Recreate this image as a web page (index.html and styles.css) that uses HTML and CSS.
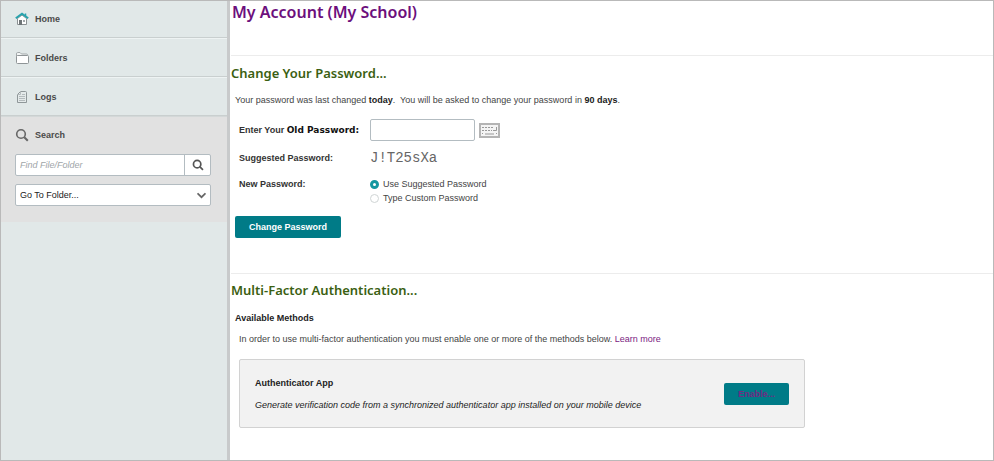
FILE: index.html
```html
<!DOCTYPE html>
<html lang="en">
<head>
    <meta charset="UTF-8">
    <meta name="viewport" content="width=device-width, initial-scale=1.0">
    <title>My Account (My School)</title>
    <link rel="stylesheet" href="styles.css">
</head>
<body>
    <aside class="sidebar">
        <nav>
            <a class="nav-item" href="#">
                <svg class="icon" viewBox="0 0 14 14">
                    <path d="M2.500 6.500V12.500H11.500V6.500L7 3Z" fill="#fff" stroke="#8a9092"/>
                    <rect x="4" y="8" width="3" height="5" fill="#6f7577"/>
                    <rect x="8" y="8" width="2" height="2" fill="#a3a9ab"/>
                    <path d="M10.500 1.500V4" stroke="#27a3ad" stroke-width="1.500"/>
                    <path d="M.8 6.300L7 1.800L13.200 6.300" fill="none" stroke="#27a3ad" stroke-width="2"/>
                </svg>
                Home
            </a>
            <a class="nav-item" href="#">
                <svg class="icon" viewBox="0 0 14 14">
                    <path d="M1.500 11V3Q1.500 1.500 2.500 1.500H5L6.500 3H11.500Q12.500 3 12.500 4" fill="#f2f5f5" stroke="#a3a9ab"/>
                    <rect x="1.500" y="4.500" width="12" height="8" rx="1" fill="#fff" stroke="#8f9597"/>
                </svg>
                Folders
            </a>
            <a class="nav-item" href="#">
                <svg class="icon" viewBox="0 0 14 14">
                    <path d="M5.500 1.500H10.500Q11.500 1.500 11.500 2.500V12.500H2.500V4.500Z" fill="#e4eaea" stroke="#8f9799"/>
                    <path d="M5.500 1.500V4.500H2.500M4 6.500H10M4 8.500H10M4 10.500H10M7 4.500H10" fill="none" stroke="#b4bbbd"/>
                </svg>
                Logs
            </a>
        </nav>
        <form class="search">
            <label class="search-title" for="find">
                <svg class="icon" viewBox="0 0 14 14">
                    <circle cx="6" cy="6" r="4.300" fill="none" stroke="#666" stroke-width="1.600"/>
                    <path d="M9.300 9.300L12.800 12.800" stroke="#666" stroke-width="2"/>
                </svg>
                Search
            </label>
            <div class="search-box">
                <input type="text" id="find" placeholder="Find File/Folder">
                <button type="button" aria-label="Search">
                    <svg class="icon-small" viewBox="0 0 14 14">
                        <circle cx="6" cy="6" r="4.300" fill="none" stroke="#555" stroke-width="2"/>
                        <path d="M9.300 9.300L12.800 12.800" stroke="#555" stroke-width="2"/>
                    </svg>
                </button>
            </div>
            <div class="folder-select">
                <select aria-label="Go To Folder">
                    <option>Go To Folder...</option>
                </select>
                <svg class="chevron" viewBox="0 0 8 6">
                    <path d="M.5 1L4 4.500L7.500 1" fill="none" stroke="#666" stroke-width="1.500"/>
                </svg>
            </div>
        </form>
    </aside>

    <main class="content">
        <h1>My Account (My School)</h1>

        <section class="password-section">
            <h2>Change Your Password...</h2>
            <p class="intro">Your password was last changed <strong>today</strong>.&nbsp; You will be asked to change your password in <strong>90 days</strong>.</p>
            <form>
                <div class="form-grid">
                    <label for="old-password">Enter Your <span class="emphasis">Old Password:</span></label>
                    <div class="old-password">
                        <input type="password" id="old-password">
                        <svg class="keyboard" viewBox="0 0 21 15">
                            <rect x="1" y="1" width="19" height="13" fill="#f4f4f4" stroke="#b4b4b4" stroke-width="2"/>
                            <path d="M3 4.500H15M3 7.500H13" stroke="#999" stroke-dasharray="2 1"/>
                            <path d="M17.500 4V7.500H14M3 10.500H4M6 11H15M17 10.500H18" fill="none" stroke="#999"/>
                        </svg>
                    </div>
                    <span>Suggested Password:</span>
                    <output class="suggested">J!T25sXa</output>
                    <span id="new-password">New Password:</span>
                    <div class="choices" role="radiogroup" aria-labelledby="new-password">
                        <label><input type="radio" name="choice" checked> Use Suggested Password</label>
                        <label><input type="radio" name="choice"> Type Custom Password</label>
                    </div>
                </div>
                <button type="button" class="button">Change Password</button>
            </form>
        </section>

        <section class="mfa-section">
            <h2>Multi-Factor Authentication...</h2>
            <h3 class="methods-title">Available Methods</h3>
            <p class="methods-text">In order to use multi-factor authentication you must enable one or more of the methods below. <a href="#">Learn more</a></p>
            <div class="method">
                <div>
                    <h3>Authenticator App</h3>
                    <p>Generate verification code from a synchronized authenticator app installed on your mobile device</p>
                </div>
                <button type="button" class="button enable">Enable...</button>
            </div>
        </section>
    </main>
</body>
</html>
```

FILE: styles.css
```css
* {
    box-sizing: border-box;
}
body {
    display: flex;
    min-height: 100vh;
    margin: 0;
    border: 1px solid #b9b9b9;
    font-family: "Liberation Sans", Arial, sans-serif;
    font-size: 9px;
    line-height: 14px;
    color: #444;
    background: #fff;
}
h1, h2 {
    margin: 0;
    font-family: "Noto Sans", sans-serif;
    font-weight: 600;
}
h1 {
    padding-left: 1px;
    font-size: 16px;
    line-height: 22px;
    color: #6c0f7c;
}
h2 {
    font-size: 13px;
    line-height: 18px;
    color: #3b5f12;
}
h3 {
    margin: 0;
    font-size: 9px;
    color: #222;
}
p {
    margin: 0;
}
input, select, button {
    font-family: inherit;
    font-size: 9px;
}

/* Sidebar */
.sidebar {
    flex: none;
    width: 229px;
    border-right: 3px solid #c8cacb;
    background: #e1e8e8;
}
.nav-item {
    display: flex;
    align-items: center;
    gap: 6px;
    height: 39px;
    padding: 0 14px;
    border-top: 1px solid #eef3f3;
    border-bottom: 1px solid #c9cfcf;
    font-weight: bold;
    color: #4a4a4a;
    text-decoration: none;
}
.nav-item:first-child {
    height: 37px;
    border-top: none;
}
.icon {
    width: 14px;
    height: 14px;
}
.search {
    padding: 11px 16px 16px 14px;
    border-top: 1px solid #d3d8d8;
    background: #e1e1e1;
}
.search-title {
    display: flex;
    align-items: center;
    gap: 6px;
    margin-bottom: 12px;
    font-weight: bold;
    color: #4a4a4a;
}
.search-box {
    display: flex;
    height: 22px;
    margin-bottom: 8px;
    border: 1px solid #b3bcc1;
    border-radius: 2px;
    background: #fff;
}
.search-box input {
    flex: 1;
    min-width: 0;
    padding: 0 4px;
    border: none;
    background: none;
}
.search-box input::placeholder {
    font-style: italic;
    color: #a0a5a8;
}
.search-box button {
    display: flex;
    align-items: center;
    justify-content: center;
    width: 26px;
    padding: 0;
    border: none;
    border-left: 1px solid #b3bcc1;
    background: none;
}
.icon-small {
    width: 12px;
    height: 12px;
}
.folder-select {
    position: relative;
}
.folder-select select {
    display: block;
    width: 100%;
    height: 22px;
    padding: 0 4px;
    border: 1px solid #b3bcc1;
    border-radius: 2px;
    background: #fff;
    color: #222;
    appearance: none;
}
.chevron {
    position: absolute;
    top: 8px;
    right: 5px;
    width: 9px;
    height: 7px;
    pointer-events: none;
}

/* Main content */
.content {
    flex: 1;
    min-width: 0;
    padding-left: 1px;
}
.password-section {
    margin-top: 32px;
    padding-top: 8px;
    border-top: 1px solid #ececec;
}
.intro {
    margin: 11px 4px 12px;
}
.intro strong {
    color: #222;
}
.form-grid {
    display: grid;
    grid-template-columns: 131px 1fr;
    padding-left: 8px;
    font-weight: bold;
    color: #333;
}
.form-grid > label {
    line-height: 22px;
}
.emphasis {
    font-family: "DejaVu Sans", sans-serif;
    color: #111;
}
.old-password {
    display: flex;
    align-items: center;
    gap: 4px;
    height: 22px;
    margin-bottom: 10px;
}
.old-password input {
    width: 105px;
    height: 22px;
    border: 1px solid #b3bcc1;
    border-radius: 2px;
}
.keyboard {
    width: 21px;
    height: 15px;
}
.suggested {
    margin-bottom: 12px;
    font-family: "Liberation Mono", monospace;
    font-size: 14px;
    font-weight: normal;
    color: #666;
}
.choices label {
    display: flex;
    align-items: center;
    gap: 4px;
    font-weight: normal;
    color: #444;
}
.choices input {
    width: 9px;
    height: 9px;
    margin: 0;
    border: 1px solid #d0d5d5;
    border-radius: 50%;
    background: #fff;
    appearance: none;
}
.choices input:checked {
    border: 3px solid #1497a0;
}
.button {
    height: 22px;
    padding: 0 14px;
    border: none;
    border-radius: 2px;
    font-weight: bold;
    color: #fff;
    background: #007b87;
}
.password-section .button {
    margin: 11px 4px 0;
}
.mfa-section {
    margin-top: 35px;
    padding: 7px 0;
    border-top: 1px solid #ececec;
}
.methods-title {
    margin: 12px 4px 7px;
}
.methods-text {
    margin: 0 8px 13px;
}
.methods-text a {
    color: #7b2382;
    text-decoration: none;
}
.method {
    display: flex;
    align-items: center;
    justify-content: space-between;
    max-width: 566px;
    height: 69px;
    margin: 0 8px;
    padding: 0 15px;
    border: 1px solid #d2d2d2;
    border-radius: 2px;
    background: #f2f2f2;
}
.method h3 {
    margin-bottom: 8px;
}
.method p {
    font-style: italic;
    color: #222;
}
.method .enable {
    color: #712a83;
}
```
